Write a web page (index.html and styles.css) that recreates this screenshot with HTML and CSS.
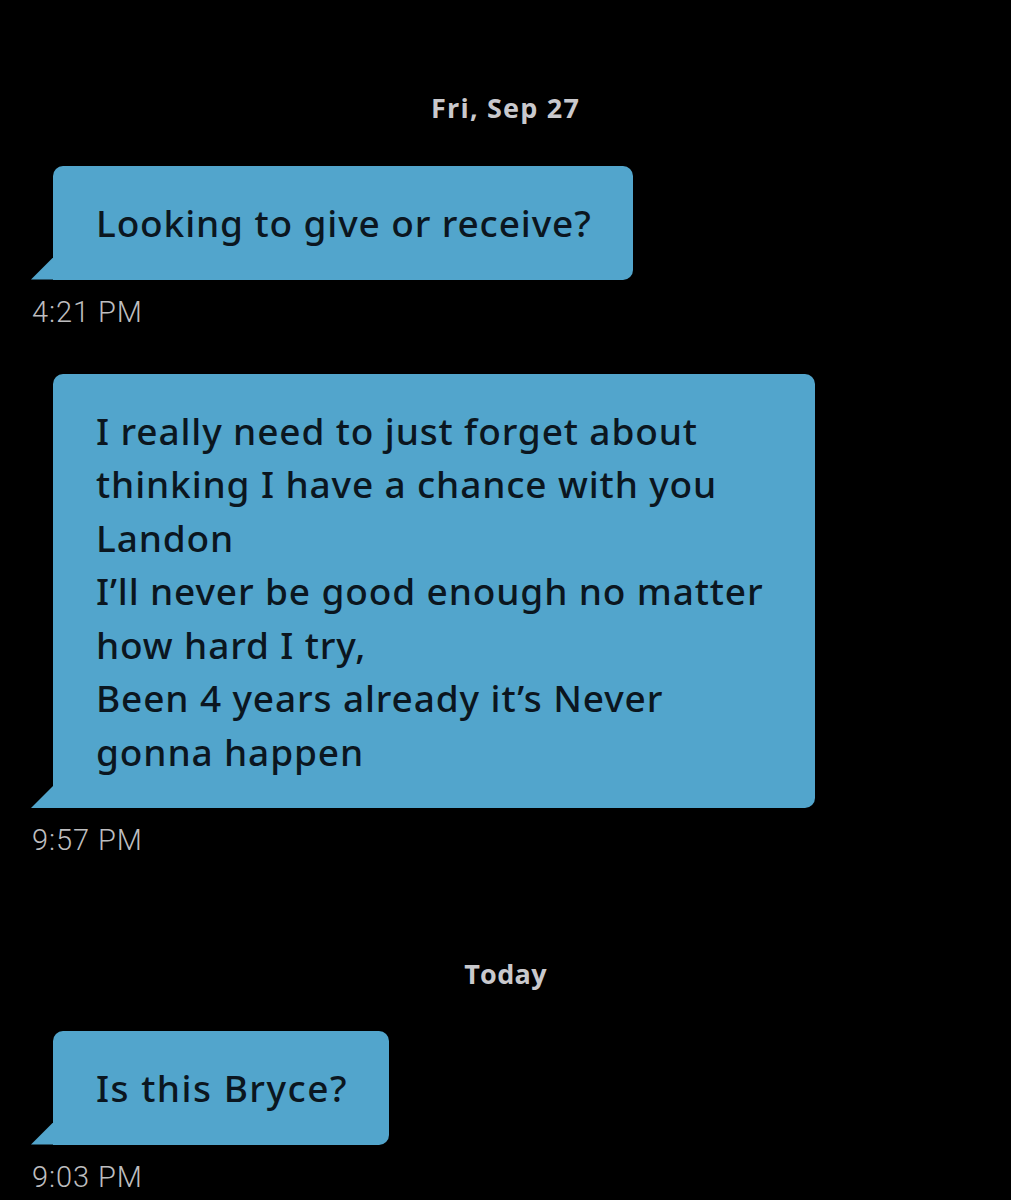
FILE: index.html
```html
<!DOCTYPE html>
<html lang="en">
<head>
<meta charset="utf-8">
<link rel="stylesheet" href="styles.css">
</head>
<body>
<main class="thread">
  <div class="day day-first">Fri, Sep 27</div>
  <div class="msg msg-first">
    <div class="bubble">Looking to give or receive?</div>
    <div class="time">4:21 PM</div>
  </div>
  <div class="msg msg-gap">
    <div class="bubble bubble-wide">I really need to just forget about<br>thinking I have a chance with you<br>Landon<br>I’ll never be good enough no matter<br>how hard I try,<br>Been 4 years already it’s Never<br>gonna happen</div>
    <div class="time">9:57 PM</div>
  </div>
  <div class="day day-today">Today</div>
  <div class="msg msg-after-day">
    <div class="bubble bubble-short">Is this Bryce?</div>
    <div class="time">9:03 PM</div>
  </div>
</main>
</body>
</html>
```
FILE: styles.css
```css
html, body {
  margin: 0;
  padding: 0;
  background: #000;
}
body {
  width: 1011px;
  height: 1200px;
  overflow: hidden;
}
.thread {
  display: flex;
  flex-direction: column;
  padding: 0 0 0 32px;
}
.day {
  font-family: "Open Sans", "Noto Sans", sans-serif;
  font-weight: 700;
  font-size: 27px;
  line-height: 30px;
  color: #c9c9cd;
  text-align: center;
  margin-left: -32px;
}
.day-first { margin-top: 93px; letter-spacing: 1.2px; }
.day-today { margin-top: 104px; letter-spacing: 0.3px; }
.msg {
  display: flex;
  flex-direction: column;
  align-items: flex-start;
}
.msg-first { margin-top: 43px; }
.msg-gap { margin-top: 47px; }
.msg-after-day { margin-top: 42px; }
.bubble {
  position: relative;
  margin-left: 21px;
  background: #52a5cc;
  color: #0b1620;
  font-family: "Noto Sans", sans-serif;
  font-weight: 500;
  font-size: 37px;
  line-height: 53.5px;
  letter-spacing: 0.88px;
  padding: 30px 41px 30px 43px;
  border-radius: 10px 10px 10px 0;
  white-space: nowrap;
}
.bubble::before {
  content: "";
  position: absolute;
  left: -22px;
  bottom: 0;
  width: 22px;
  height: 22px;
  background: #52a5cc;
  clip-path: polygon(100% 0, 100% 100%, 0 100%);
}
.bubble-wide {
  width: 678px;
}
.bubble-short {
  letter-spacing: 1.5px;
}
.time {
  margin-top: 17px;
  font-family: "Roboto", "Liberation Sans", sans-serif;
  font-weight: 300;
  font-size: 29px;
  line-height: 30px;
  letter-spacing: 0.9px;
  color: #bdbdbf;
}
```
